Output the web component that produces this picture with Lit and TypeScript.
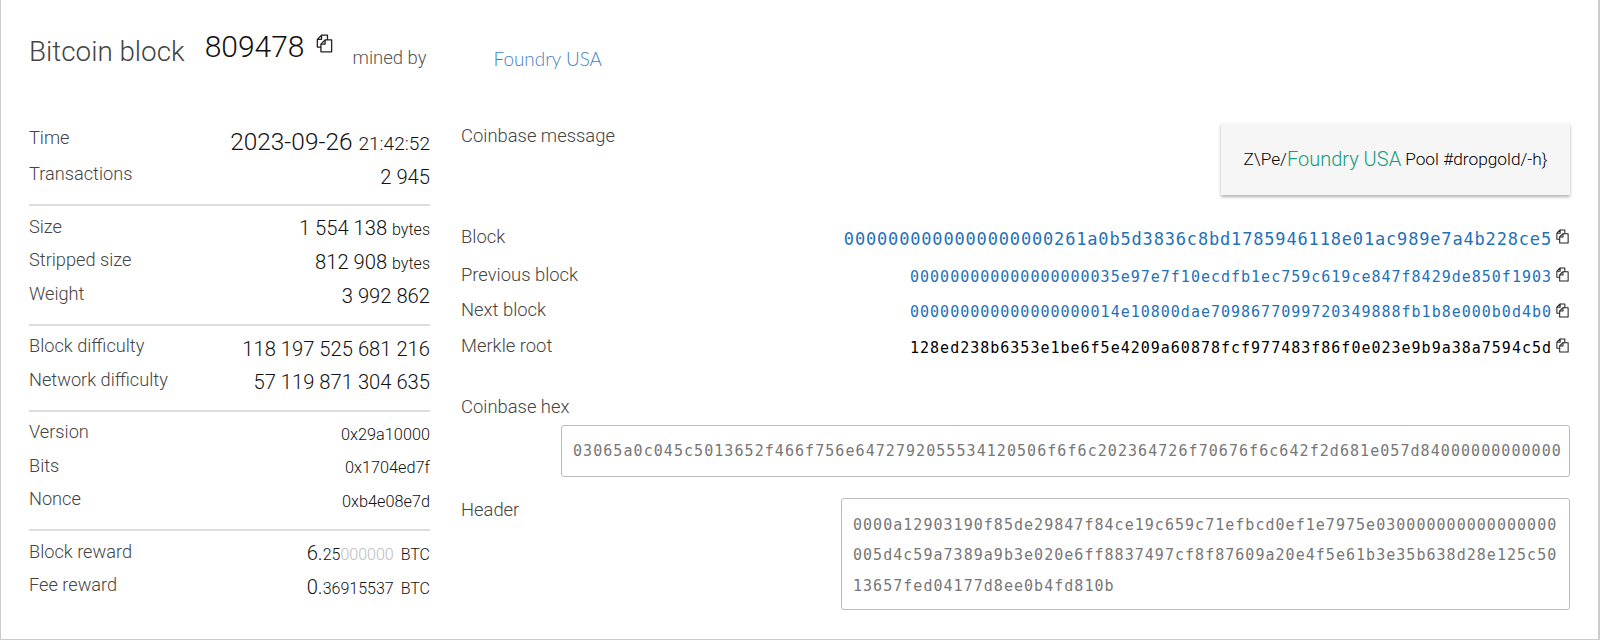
import { LitElement, html, css, svg } from "lit";
import { customElement } from "lit/decorators.js";

const copyIcon = (size: number) => html`<svg class="copy" width=${size} height=${size} viewBox="0 0 16 16" fill="none" stroke="#222" stroke-width="1.1" stroke-linejoin="round">
  ${svg`<path d="M5.5 1H10.5V5"/><path d="M5 11H2V4.5L5.5 1V4.5H2"/><path d="M8.5 5H14V15H5V8.5Z"/><path d="M8.5 5V8.5H5"/>`}
</svg>`;

type Row = [string, unknown];

@customElement("app-root")
export class AppRoot extends LitElement {
  static styles = css`
    :host { display: block; height: 640px; font-family: Roboto, sans-serif; font-weight: 300; color: #000; background: #fff; }
    * { box-sizing: border-box; }
    .card { height: 640px; border: 1px solid #ccc; border-width: 0 2px 1px 1px; padding: 0 28px 0 28px; display: flex; flex-direction: column; }
    .head { display: flex; height: 119px; }
    .title { font-size: 27.8px; color: #444; padding-top: 36px; line-height: 32px; }
    .num { font-size: 30px; padding-top: 29px; margin-left: 20px; line-height: 36px; color: #111; }
    .head .copy { margin: 34px 0 0 10px; }
    .mined { font-size: 18.5px; color: #555; padding-top: 47px; margin-left: 19px; line-height: 22px; }
    .pool { font-size: 18.9px; color: #3f7fc1; padding-top: 48px; margin-left: 67px; line-height: 22px; font-family: Lato, sans-serif; }
    .body { display: grid; grid-template-columns: 401px 1fr; column-gap: 31px; }
    .left { display: flex; flex-direction: column; }
    .group { border-bottom: 2px solid #ddd; padding-bottom: 13px; margin-bottom: 4px; }
    .group:last-child { border: 0; }
    .row { display: flex; justify-content: space-between; height: 33.5px; align-items: center; }
    .row.first { height: 38.5px; }
    .lbl { font-size: 18.2px; color: #444; line-height: 20px; }
    .right .lbl { font-size: 18.4px; }
    .val { font-size: 20.2px; color: #111; line-height: 24px; padding-top: 5px; }
    .val small { font-size: 16px; font-weight: 300; color: #111; }
    .val.sm { font-size: 16.3px; font-weight: 300; color: #111; }
    .val.big { font-size: 24.4px; padding-top: 9px; }
    .val.big small { font-size: 19.1px; }
    .dim { color: #bbb; }
    .frac { font-size: 16px; }
    .unit { font-size: 16px; margin-left: 7px; }
    .right { display: flex; flex-direction: column; }
    .msgrow { display: flex; justify-content: space-between; height: 100px; }
    .msgrow .lbl { padding-top: 7px; }
    .msg { width: 349px; height: 72px; margin-top: 4px; background: #f6f6f6; box-shadow: 0 2px 3px rgba(0,0,0,.3); display: flex; align-items: center; justify-content: center; font-size: 17.3px; font-weight: 300; color: #000; }
    .msg b { font-weight: 300; font-size: 20px; color: #139a80; margin-right: 4px; }
    .hash { display: flex; justify-content: space-between; align-items: center; height: 35.5px; }
    .hash.top { margin-bottom: 2.5px; }
    .hval { display: flex; align-items: center; gap: 3px; }
    .mono { font-family: "DejaVu Sans Mono", monospace; font-weight: 400; }
    .h { font-size: 15px; letter-spacing: 1px; color: #1f71b8; padding-top: 4px; }
    .h.first { font-size: 17px; letter-spacing: .83px; }
    .h.plain { color: #000; }
    .block { margin-top: 33px; }
    .box { border: 1px solid #bbb; border-radius: 3px; color: #777; font-size: 15px; }
    .boxrow { display: flex; justify-content: flex-end; }
    .cb { width: 1009px; height: 52px; margin-top: 8px; padding: 0 11px; display: flex; align-items: center; white-space: nowrap; letter-spacing: 1.06px; }
    .hd { width: 729px; height: 112px; padding: 11px; line-height: 30.5px; white-space: pre; letter-spacing: 1.03px; }
    .hdrow { display: flex; justify-content: space-between; margin-top: 21px; }
    .hdrow .lbl { padding-top: 2px; }
  `;

  private group(rows: Row[], firstTall = false) {
    return html`<div class="group">${rows.map(([l, v], i) => html`<div class="row ${firstTall && i === 0 ? "first" : ""}"><span class="lbl">${l}</span>${v}</div>`)}</div>`;
  }

  private hashRow(label: string, value: string, cls: string, rowCls = "") {
    return html`<div class="hash ${rowCls}"><span class="lbl">${label}</span><span class="hval"><span class="mono h ${cls}">${value}</span>${copyIcon(15)}</span></div>`;
  }

  render() {
    const v = (s: string, u?: string) => html`<span class="val">${s}${u ? html` <small>${u}</small>` : ""}</span>`;
    const sm = (s: string) => html`<span class="val sm">${s}</span>`;
    const z = "0".repeat(19);
    return html`<div class="card">
      <div class="head">
        <span class="title">Bitcoin block</span>
        <span class="num">809478</span>${copyIcon(19)}
        <span class="mined">mined by</span>
        <span class="pool">Foundry USA</span>
      </div>
      <div class="body">
        <div class="left">
          ${this.group([
            ["Time", html`<span class="val big">2023-09-26 <small>21:42:52</small></span>`],
            ["Transactions", v("2 945")],
          ], true)}
          ${this.group([
            ["Size", v("1 554 138", "bytes")],
            ["Stripped size", v("812 908", "bytes")],
            ["Weight", v("3 992 862")],
          ])}
          ${this.group([
            ["Block difficulty", v("118 197 525 681 216")],
            ["Network difficulty", v("57 119 871 304 635")],
          ])}
          ${this.group([
            ["Version", sm("0x29a10000")],
            ["Bits", sm("0x1704ed7f")],
            ["Nonce", sm("0xb4e08e7d")],
          ])}
          ${this.group([
            ["Block reward", html`<span class="val">6.<span class="frac">25<span class="dim">000000</span></span><span class="unit">BTC</span></span>`],
            ["Fee reward", html`<span class="val">0.<span class="frac">36915537</span><span class="unit">BTC</span></span>`],
          ])}
        </div>
        <div class="right">
          <div class="msgrow">
            <span class="lbl">Coinbase message</span>
            <div class="msg">Z\\Pe/<b>Foundry USA</b>Pool #dropgold/-h}</div>
          </div>
          ${this.hashRow("Block", z + "261a0b5d3836c8bd1785946118e01ac989e7a4b228ce5", "first", "top")}
          ${this.hashRow("Previous block", z + "35e97e7f10ecdfb1ec759c619ce847f8429de850f1903", "")}
          ${this.hashRow("Next block", z + "14e10800dae7098677099720349888fb1b8e000b0d4b0", "")}
          ${this.hashRow("Merkle root", "128ed238b6353e1be6f5e4209a60878fcf977483f86f0e023e9b9a38a7594c5d", "plain")}
          <div class="block"><span class="lbl">Coinbase hex</span></div>
          <div class="boxrow"><div class="box mono cb">03065a0c045c5013652f466f756e6472792055534120506f6f6c202364726f70676f6c642f2d681e057d84000000000000</div></div>
          <div class="hdrow"><span class="lbl">Header</span><div class="box mono hd">0000a12903190f85de29847f84ce19c659c71efbcd0ef1e7975e030000000000000000
005d4c59a7389a9b3e020e6ff8837497cf8f87609a20e4f5e61b3e35b638d28e125c50
13657fed04177d8ee0b4fd810b</div></div>
        </div>
      </div>
    </div>`;
  }
}
